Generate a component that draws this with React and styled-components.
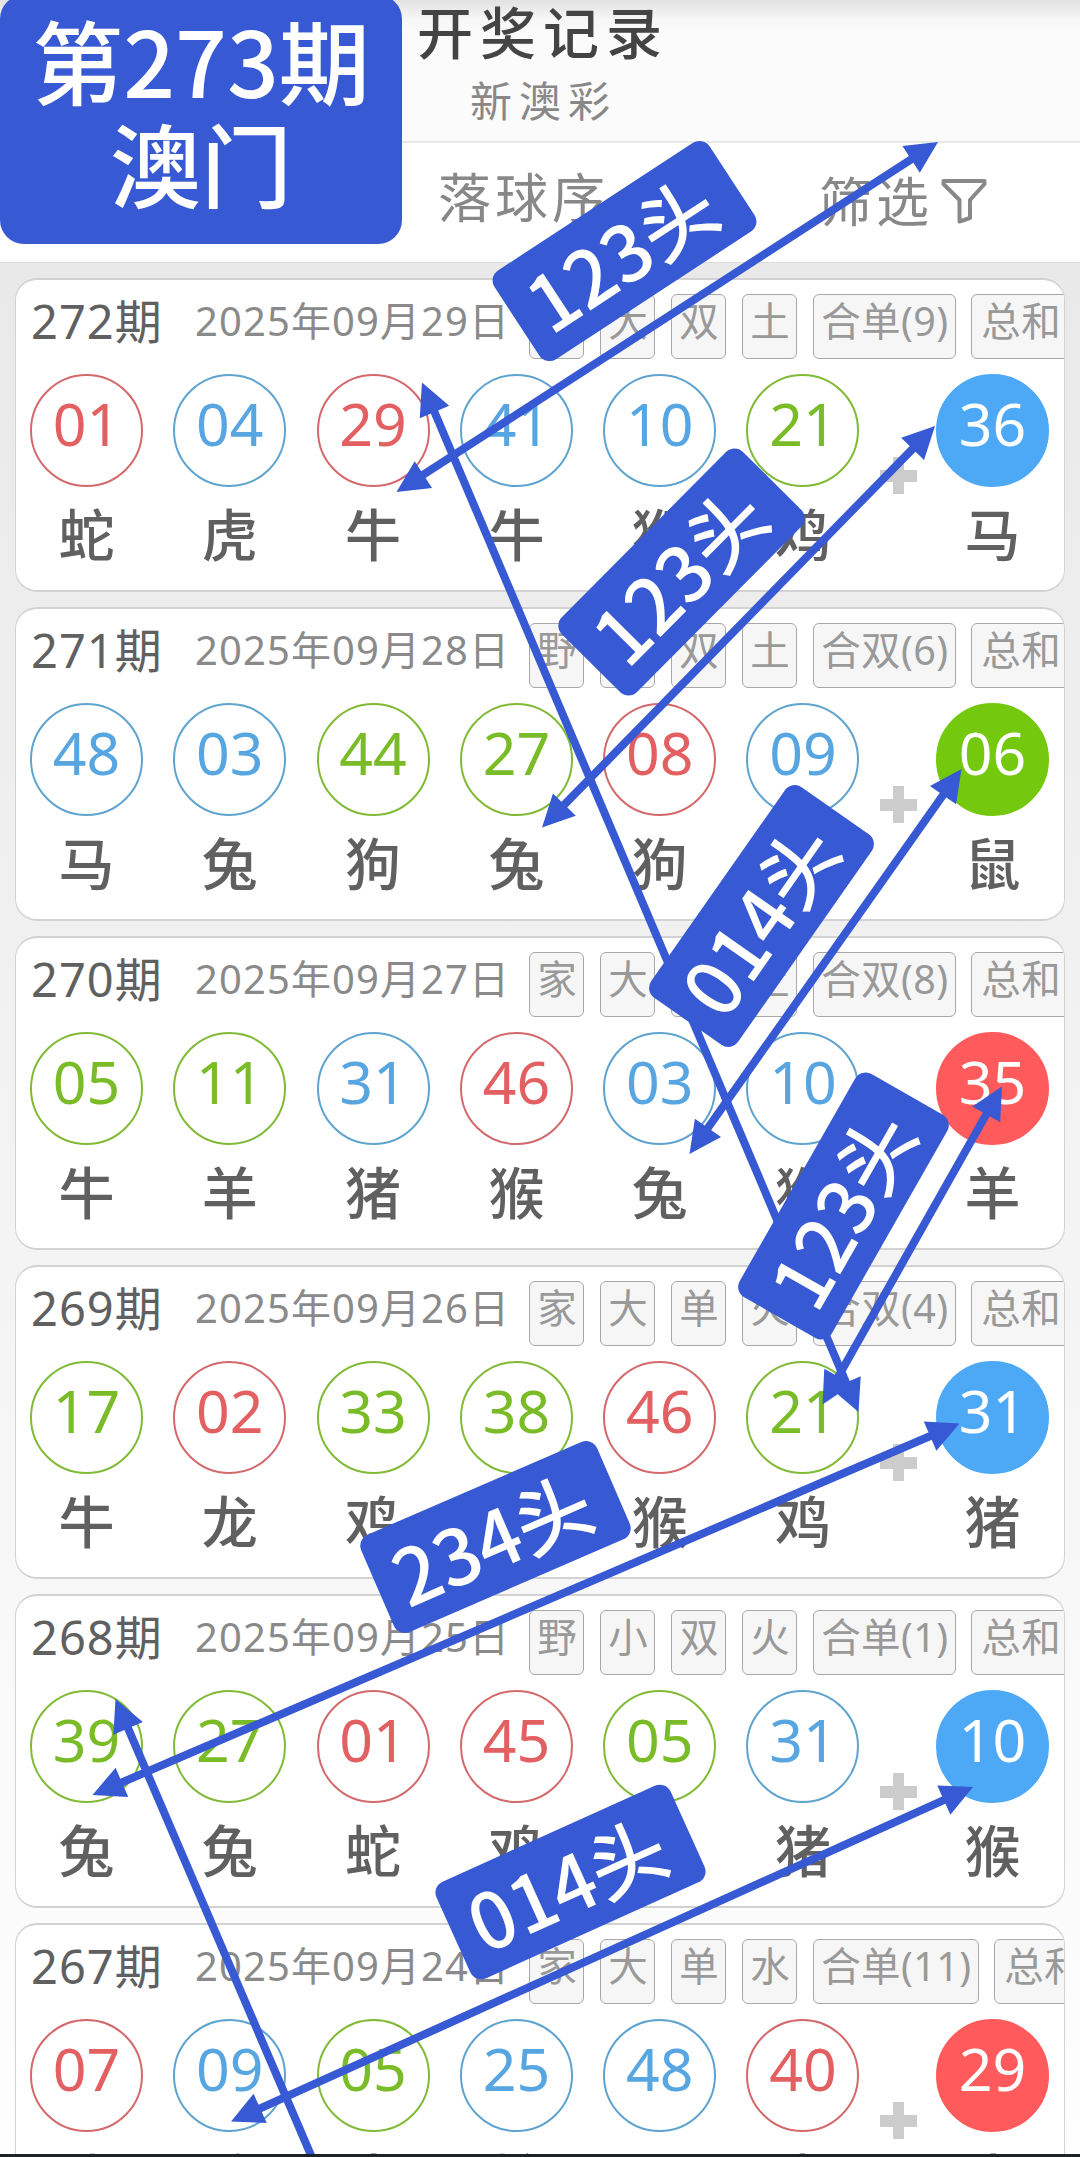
import styled, { createGlobalStyle } from 'styled-components'

const draws = [
    {
        issue: '272', date: '2025年09月29日',
        tags: ['家', '大', '双', '土', '合单(9)', '总和'],
        balls: [['01', 'red', '蛇'], ['04', 'blue', '虎'], ['29', 'red', '牛'], ['41', 'blue', '牛'], ['10', 'blue', '猴'], ['21', 'green', '鸡']],
        special: ['36', 'blue', '马']
    },
    {
        issue: '271', date: '2025年09月28日',
        tags: ['野', '小', '双', '土', '合双(6)', '总和'],
        balls: [['48', 'blue', '马'], ['03', 'blue', '兔'], ['44', 'green', '狗'], ['27', 'green', '兔'], ['08', 'red', '狗'], ['09', 'blue', '鸡']],
        special: ['06', 'green', '鼠']
    },
    {
        issue: '270', date: '2025年09月27日',
        tags: ['家', '大', '单', '土', '合双(8)', '总和'],
        balls: [['05', 'green', '牛'], ['11', 'green', '羊'], ['31', 'blue', '猪'], ['46', 'red', '猴'], ['03', 'blue', '兔'], ['10', 'blue', '猴']],
        special: ['35', 'red', '羊']
    },
    {
        issue: '269', date: '2025年09月26日',
        tags: ['家', '大', '单', '火', '合双(4)', '总和'],
        balls: [['17', 'green', '牛'], ['02', 'red', '龙'], ['33', 'green', '鸡'], ['38', 'green', '龙'], ['46', 'red', '猴'], ['21', 'green', '鸡']],
        special: ['31', 'blue', '猪']
    },
    {
        issue: '268', date: '2025年09月25日',
        tags: ['野', '小', '双', '火', '合单(1)', '总和'],
        balls: [['39', 'green', '兔'], ['27', 'green', '兔'], ['01', 'red', '蛇'], ['45', 'red', '鸡'], ['05', 'green', '牛'], ['31', 'blue', '猪']],
        special: ['10', 'blue', '猴']
    },
    {
        issue: '267', date: '2025年09月24日',
        tags: ['家', '大', '单', '水', '合单(11)', '总和'],
        balls: [['07', 'red', '猪'], ['09', 'blue', '鸡'], ['05', 'green', '牛'], ['25', 'blue', '蛇'], ['48', 'blue', '马'], ['40', 'red', '虎']],
        special: ['29', 'red', '牛']
    }
]

const arrows = [
    [938, 142, 396.5, 492],
    [935, 426, 542, 827.5],
    [961.5, 769, 689.5, 1154],
    [1002, 1086.5, 822.5, 1404.5],
    [422, 382.5, 858.5, 1412],
    [959.5, 1423.5, 92.5, 1795],
    [973, 1787, 231, 2121.5],
    [115.5, 1699, 373, 2300]
]

// x, y are the centre of each label
const labels = [
    { text: '123头', x: 624, y: 251, angle: -33.2 },
    { text: '123头', x: 681.5, y: 571.5, angle: -45.2 },
    { text: '014头', x: 761, y: 916, angle: -55 },
    { text: '123头', x: 843, y: 1206, angle: -60.3 },
    { text: '234头', x: 495, y: 1536.5, angle: -23.4 },
    { text: '014头', x: 570, y: 1882, angle: -24.3 }
]

const colors = {
    red: { ring: '#d4696c', text: '#e36062', fill: '#ff5b5c' },
    blue: { ring: '#5fa3cf', text: '#58a6e1', fill: '#4da9f5' },
    green: { ring: '#81ba36', text: '#7abc27', fill: '#74c80d' }
}

const MARK = '#3759d3'

function Arrow({ points }) {
    const [x1, y1, x2, y2] = points
    const len = Math.hypot(x2 - x1, y2 - y1)
    const ux = (x2 - x1) / len
    const uy = (y2 - y1) / len

    const head = (x, y, dir) => {
        const bx = x + ux * 32 * dir
        const by = y + uy * 32 * dir
        return `${x},${y} ${bx - uy * 16},${by + ux * 16} ${bx + uy * 16},${by - ux * 16}`
    }

    return (
        <g>
            <line x1={x1 + ux * 26} y1={y1 + uy * 26} x2={x2 - ux * 26} y2={y2 - uy * 26} />
            <polygon points={head(x1, y1, 1)} />
            <polygon points={head(x2, y2, -1)} />
        </g>
    )
}

function Ball({ data, filled }) {
    const [num, color, zodiac] = data
    return (
        <BallColumn>
            <Circle $color={colors[color]} $filled={filled}>{num}</Circle>
            <Zodiac>{zodiac}</Zodiac>
        </BallColumn>
    )
}

function DrawCard({ draw }) {
    const { issue, date, tags, balls, special } = draw
    return (
        <Card>
            <CardHead>
                <Issue>{issue}期</Issue>
                <DrawDate>{date}</DrawDate>
                <Tags>
                    {tags.map((tag, i) => <Tag key={i}>{tag}</Tag>)}
                </Tags>
            </CardHead>
            <Balls>
                {balls.map((ball, i) => <Ball key={i} data={ball} />)}
                <Plus />
                <Ball data={special} filled />
            </Balls>
        </Card>
    )
}

function App() {
    return (
        <Page>
            <GlobalStyle />
            <Header>
                <Title>开奖记录</Title>
                <SubTitle>新澳彩</SubTitle>
            </Header>
            <Toolbar>
                <SortTab>落球序</SortTab>
                <FilterTab>
                    筛选
                    <svg width="46" height="46" viewBox="0 0 46 46" fill="none" stroke="#888" strokeWidth="4" strokeLinejoin="round">
                        <path d="M2.5 3H43.5V6L29 22V40L18.5 43.5V22L2.5 6Z" />
                    </svg>
                </FilterTab>
            </Toolbar>
            <List>
                {draws.map(draw => <DrawCard key={draw.issue} draw={draw} />)}
            </List>

            <Canvas viewBox="0 0 1080 2157">
                {arrows.map((points, i) => <Arrow key={i} points={points} />)}
            </Canvas>
            {labels.map((l, i) => (
                <Label key={i} $x={l.x} $y={l.y} $angle={l.angle}>{l.text}</Label>
            ))}
            <Badge>
                <div>第273期</div>
                <div>澳门</div>
            </Badge>
        </Page>
    )
}

export default App

const GlobalStyle = createGlobalStyle`
    * {
        box-sizing: border-box;
    }
    body {
        margin: 0;
        font-family: 'Noto Sans', 'Noto Sans CJK SC', sans-serif;
    }
`

const Page = styled.div`
    position: relative;
    display: flex;
    flex-direction: column;
    width: 1080px;
    height: 2157px;
    overflow: hidden;
    border-bottom: 3px solid #1e232a;
    background: linear-gradient(#e9e9e9 260px, #fefefe 2157px);
`

const Header = styled.header`
    display: flex;
    flex-direction: column;
    align-items: center;
    flex: none;
    height: 143px;
    border-bottom: 2px solid #e8e8e8;
    background: linear-gradient(#e2e2e2, #f7f7f7 20px, #fbfbfb 36px);
`

const Title = styled.h1`
    margin: 0;
    padding-left: 6px;
    font-size: 56px;
    font-weight: 500;
    line-height: 65px;
    letter-spacing: 7px;
    color: #444;
`

const SubTitle = styled.div`
    padding-left: 7px;
    font-size: 42px;
    line-height: 72px;
    letter-spacing: 7px;
    color: #888;
`

const Toolbar = styled.div`
    display: flex;
    flex: none;
    height: 120px;
    padding-left: 438px;
    border-bottom: 1px solid #ddd;
    background: #fff;
    font-size: 53px;
    line-height: 109px;
    letter-spacing: 4px;
    color: #888;
`

const SortTab = styled.div`
    width: 381px;
`

const FilterTab = styled.div`
    display: flex;
    align-items: center;
    height: 116px;

    svg {
        margin-left: 8px;
    }
`

const List = styled.main`
    display: flex;
    flex-direction: column;
    gap: 15px;
    padding: 15px 15px 0;
`

const Card = styled.section`
    flex: none;
    height: 314px;
    padding-top: 14px;
    overflow: hidden;
    border: 2px solid #d2d2d2;
    border-width: 2px 1px;
    border-radius: 22px;
    background: #fff;
`

const CardHead = styled.div`
    display: flex;
    height: 80px;
    padding-left: 15px;
    white-space: nowrap;
`

const Issue = styled.div`
    flex: none;
    width: 164px;
    font-size: 47px;
    line-height: 55px;
    letter-spacing: 1px;
    color: #606060;
`

const DrawDate = styled.div`
    flex: none;
    width: 334px;
    font-size: 40px;
    line-height: 54px;
    letter-spacing: 1.1px;
    color: #8a8a8a;
`

const Tags = styled.div`
    display: flex;
    flex: none;
    gap: 15.5px;
`

const Tag = styled.span`
    flex: none;
    height: 65px;
    padding: 0 6.4px 0 7.2px;
    border: 1px solid #a8a8a8;
    border-radius: 6px;
    background: #f6f6f6;
    font-size: 39.5px;
    line-height: 52px;
    letter-spacing: 0.4px;
    color: #999;

    &:last-child {
        width: 150px;
        padding-left: 9px;
    }
`

const Balls = styled.div`
    display: flex;
    gap: 30.3px;
    padding-left: 14px;
`

const BallColumn = styled.div`
    display: flex;
    flex-direction: column;
    flex: none;
    width: 113px;
`

const Circle = styled.div`
    height: 113px;
    border: 2px solid ${({ $color, $filled }) => $filled ? $color.fill : $color.ring};
    border-radius: 50%;
    background: ${({ $color, $filled }) => $filled ? $color.fill : '#fff'};
    font-size: 59px;
    line-height: 95px;
    text-align: center;
    color: ${({ $color, $filled }) => $filled ? '#fff' : $color.text};
`

const Zodiac = styled.div`
    font-size: 56px;
    font-weight: 500;
    line-height: 94px;
    text-align: center;
    color: #606060;
`

const Plus = styled.div`
    flex: none;
    width: 37px;
    height: 37px;
    margin: 83px -11px 0 -10px;
    background:
        linear-gradient(#ccc, #ccc) center / 11px 37px no-repeat,
        linear-gradient(#ccc, #ccc) center / 37px 12px no-repeat;
`

const Canvas = styled.svg`
    position: absolute;
    top: 0;
    left: 0;
    width: 1080px;
    height: 2157px;
    fill: ${MARK};
    stroke-width: 8px;

    line {
        stroke: ${MARK};
    }
`

const Label = styled.div`
    position: absolute;
    top: ${({ $y }) => $y - 53}px;
    left: ${({ $x }) => $x - 128.5}px;
    width: 257px;
    height: 106px;
    padding-right: 8px;
    border-radius: 12px;
    background: ${MARK};
    font-family: 'Noto Sans CJK SC', sans-serif;
    font-size: 77px;
    font-weight: 500;
    line-height: 102px;
    text-align: center;
    color: #fff;
    transform: rotate(${({ $angle }) => $angle}deg);
`

const Badge = styled.div`
    position: absolute;
    top: -5px;
    left: 0;
    width: 402px;
    height: 249px;
    padding-top: 12px;
    border-radius: 24px;
    background: ${MARK};
    font-family: 'Noto Sans CJK SC', sans-serif;
    font-size: 91px;
    font-weight: 500;
    line-height: 103px;
    text-align: center;
    color: #fff;
`
